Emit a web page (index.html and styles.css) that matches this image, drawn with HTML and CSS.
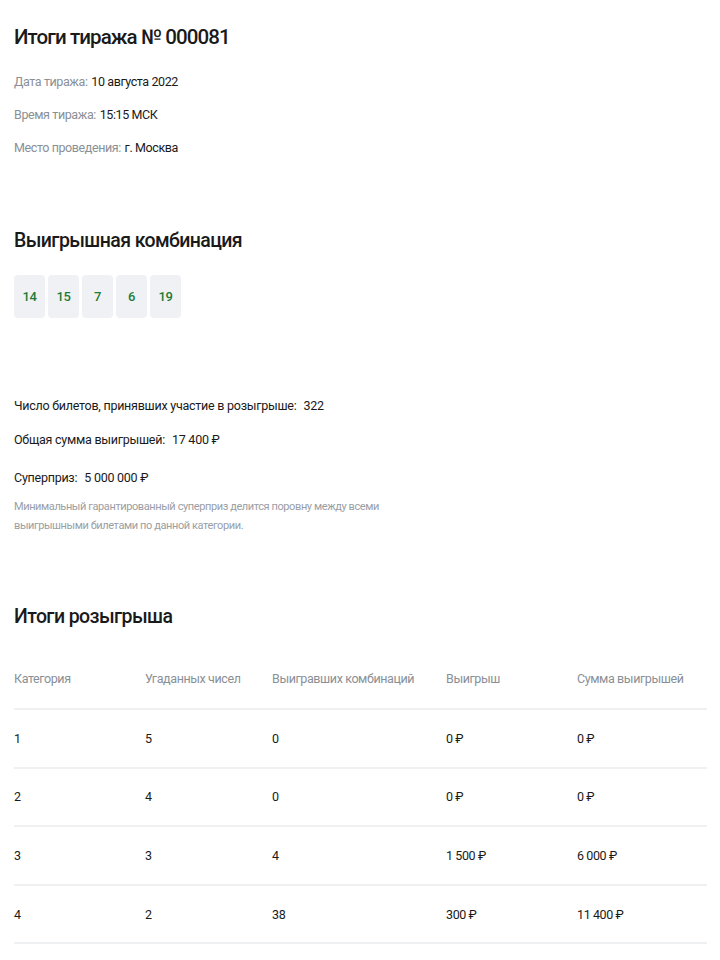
FILE: index.html
```html
<!DOCTYPE html>
<html lang="ru">
<head>
<meta charset="utf-8">
<link rel="stylesheet" href="styles.css">
</head>
<body>
<main class="page">
  <section class="draw">
    <h1 class="title">Итоги тиража № 000081</h1>
    <ul class="meta">
      <li><span class="label">Дата тиража:</span> <span class="value">10 августа 2022</span></li>
      <li><span class="label">Время тиража:</span> <span class="value">15:15 МСК</span></li>
      <li><span class="label">Место проведения:</span> <span class="value">г. Москва</span></li>
    </ul>
  </section>

  <section class="combo">
    <h2 class="subtitle">Выигрышная комбинация</h2>
    <div class="balls">
      <span class="ball">14</span>
      <span class="ball">15</span>
      <span class="ball">7</span>
      <span class="ball">6</span>
      <span class="ball">19</span>
    </div>
  </section>

  <section class="stats">
    <p class="stat">Число билетов, принявших участие в розыгрыше:<span class="val">322</span></p>
    <p class="stat">Общая сумма выигрышей:<span class="val">17 400 ₽</span></p>
    <p class="stat stat-prize">Суперприз:<span class="val">5 000 000 ₽</span></p>
    <p class="note">Минимальный гарантированный суперприз делится поровну между всеми<br>выигрышными билетами по данной категории.</p>
  </section>

  <section class="results">
    <h2 class="subtitle">Итоги розыгрыша</h2>
    <table class="table">
      <thead>
        <tr><th>Категория</th><th>Угаданных чисел</th><th>Выигравших комбинаций</th><th>Выигрыш</th><th>Сумма выигрышей</th></tr>
      </thead>
      <tbody>
        <tr><td>1</td><td>5</td><td>0</td><td>0 ₽</td><td>0 ₽</td></tr>
        <tr><td>2</td><td>4</td><td>0</td><td>0 ₽</td><td>0 ₽</td></tr>
        <tr><td>3</td><td>3</td><td>4</td><td>1 500 ₽</td><td>6 000 ₽</td></tr>
        <tr><td>4</td><td>2</td><td>38</td><td>300 ₽</td><td>11 400 ₽</td></tr>
      </tbody>
    </table>
  </section>
</main>
</body>
</html>
```

FILE: styles.css
```css
* { box-sizing: border-box; }
html, body { margin: 0; padding: 0; background: #fff; }
body {
  font-family: Roboto, "Liberation Sans", Arial, sans-serif;
  color: #1a1a1a;
  letter-spacing: -0.4px;
}
.page { padding: 22px 13px 0 14px; }
.title {
  margin: 0;
  font-size: 20.5px;
  font-weight: 500;
  line-height: 30px;
  letter-spacing: -0.9px;
}
.meta {
  list-style: none;
  margin: 13px 0 0;
  padding: 0;
  font-size: 12.5px;
  line-height: 33px;
}
.label { color: #8a8f96; margin-right: 1px; }
.value { color: #1a1a1a; }
.val { margin-left: 7px; }
.combo { margin-top: 62px; }
.subtitle {
  margin: 0;
  font-size: 19.5px;
  font-weight: 500;
  line-height: 30px;
  letter-spacing: -0.6px;
}
.balls {
  display: flex;
  gap: 3px;
  margin-top: 19px;
}
.ball {
  width: 31px;
  height: 43px;
  border-radius: 4px;
  background: #f0f1f4;
  color: #1e7b35;
  font-size: 13px;
  font-weight: 500;
  display: flex;
  align-items: center;
  justify-content: center;
}
.stats { margin-top: 71px; }
.stat {
  margin: 0;
  font-size: 12.5px;
  line-height: 34px;
  letter-spacing: -0.25px;
}
.stat-prize { line-height: 38px; margin-top: 2px; }
.note {
  margin: 0;
  font-size: 11px;
  line-height: 19px;
  color: #9a9ea5;
}
.results { margin-top: 67px; }
.table {
  margin-top: 16px;
  width: 693px;
  border-collapse: collapse;
  font-size: 12.5px;
}
.table th {
  text-align: left;
  font-weight: 400;
  color: #8a8f96;
  height: 61px;
  padding: 0;
  vertical-align: middle;
  border-bottom: 2px solid #eef0f2;
}
.table td {
  height: 58.6px;
  padding: 0;
  vertical-align: middle;
  border-bottom: 2px solid #eef0f2;
}
.table th:nth-child(1), .table td:nth-child(1) { width: 131px; }
.table th:nth-child(2), .table td:nth-child(2) { width: 127px; }
.table th:nth-child(3), .table td:nth-child(3) { width: 174px; }
.table th:nth-child(4), .table td:nth-child(4) { width: 131px; }
```
